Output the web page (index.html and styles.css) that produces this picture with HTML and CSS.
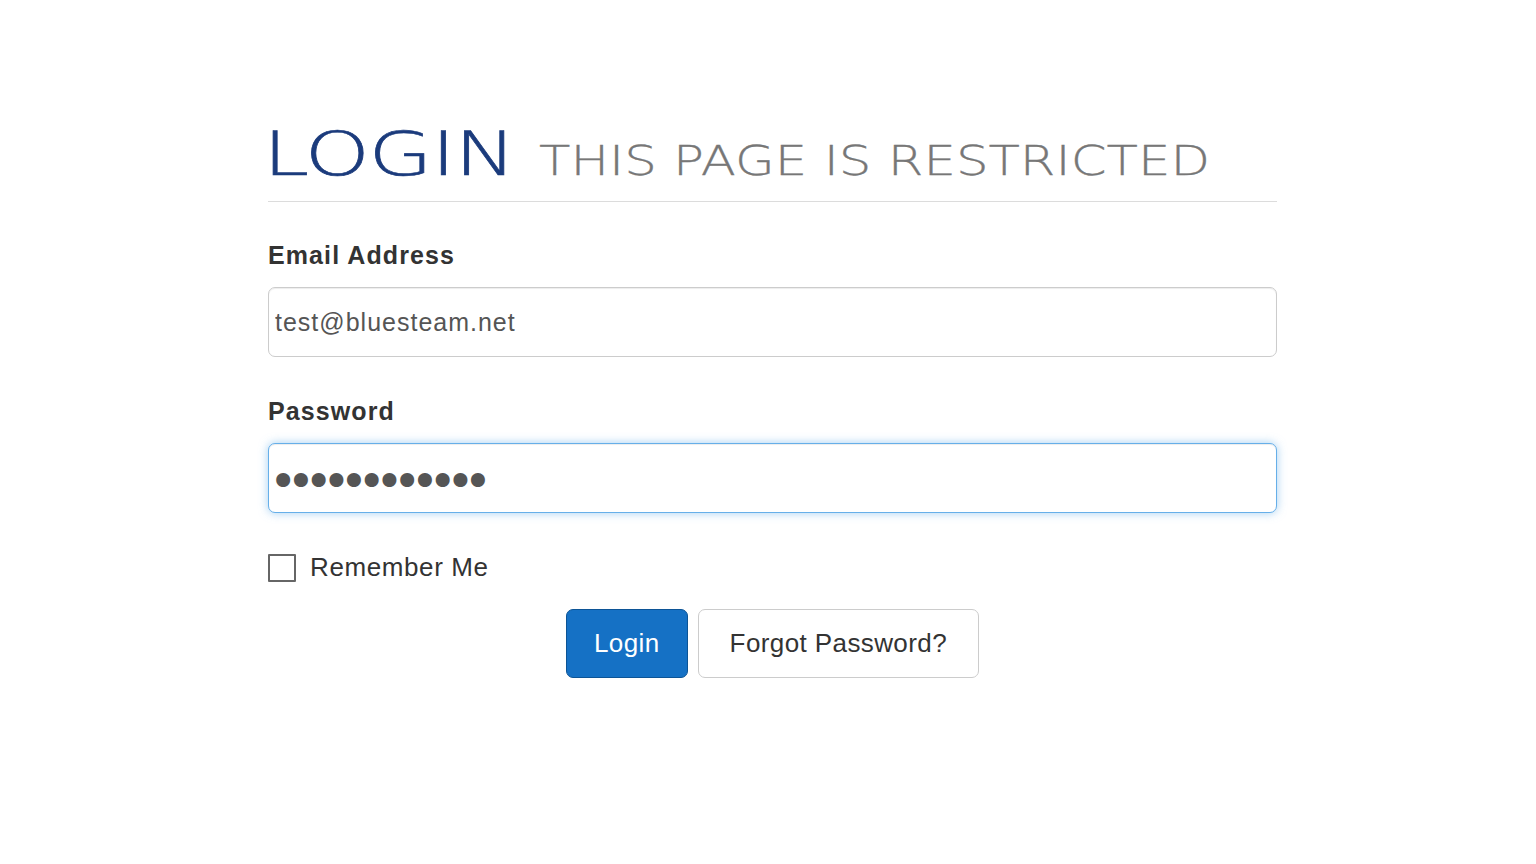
FILE: index.html
```html
<!DOCTYPE html>
<html lang="en">
<head>
<meta charset="utf-8">
<title>Login</title>
<link rel="stylesheet" href="styles.css">
</head>
<body>
<main class="page">
  <h1 class="title">
    <span class="title-main">LOGIN</span>
    <span class="title-sub">THIS PAGE IS RESTRICTED</span>
  </h1>
  <form class="form">
    <div class="group">
      <label class="label" for="email">Email Address</label>
      <input class="field" id="email" type="text" value="test@bluesteam.net">
    </div>
    <div class="group">
      <label class="label" for="pw">Password</label>
      <input class="field field-focus" id="pw" type="password" value="abcdefghijkl">
    </div>
    <label class="check">
      <input class="check-box" type="checkbox">
      <span class="check-text">Remember Me</span>
    </label>
    <div class="actions">
      <button type="button" class="btn btn-primary">Login</button>
      <button type="button" class="btn btn-default">Forgot Password?</button>
    </div>
  </form>
</main>
</body>
</html>
```
FILE: styles.css
```css
html, body {
  margin: 0;
  padding: 0;
  background: #ffffff;
}
body {
  font-family: "Liberation Sans", Arial, sans-serif;
  color: #333333;
}
.page {
  width: 1009px;
  margin: 0 0 0 268px;
}
.title {
  margin: 0;
  padding: 124px 0 17px 0;
  border-bottom: 1px solid #dcdcdc;
  font-family: "DejaVu Sans", sans-serif;
  font-weight: 200;
  line-height: 60px;
  height: 60px;
  white-space: nowrap;
}
.title-main {
  display: inline-block;
  margin-left: -5px;
  font-size: 60px;
  color: #1b3b7c;
  letter-spacing: -1px;
  transform: scaleX(1.38);
  transform-origin: left bottom;
  -webkit-text-stroke: 0.6px #1b3b7c;
}
.title-sub {
  display: inline-block;
  font-size: 41px;
  color: #777777;
  margin-left: 83px;
  transform: scaleX(1.253);
  transform-origin: left bottom;
  -webkit-text-stroke: 0.3px #777777;
}
.form {
  display: flex;
  flex-direction: column;
}
.group {
  display: flex;
  flex-direction: column;
}
.group + .group {
  margin-top: 39px;
}
.group:first-child {
  margin-top: 38px;
}
.label {
  font-size: 25px;
  font-weight: bold;
  line-height: 30px;
  color: #333333;
  margin-bottom: 17px;
  letter-spacing: 1.1px;
}
.field {
  box-sizing: border-box;
  height: 70px;
  width: 100%;
  margin: 0;
  padding: 0 6px;
  border: 1px solid #cccccc;
  border-radius: 7px;
  background: #ffffff;
  font-family: "Liberation Sans", Arial, sans-serif;
  font-size: 25px;
  letter-spacing: 1px;
  color: #555555;
  box-shadow: inset 0 1px 1px rgba(0, 0, 0, 0.075);
  outline: none;
}
.field-focus {
  border-color: #66afe9;
  box-shadow: inset 0 1px 1px rgba(0, 0, 0, 0.075), 0 0 10px rgba(102, 175, 233, 0.6);
  font-family: "DejaVu Sans", sans-serif;
  font-size: 48px;
  letter-spacing: -10.6px;
  padding: 6px 0 0 0;
}
.check {
  display: flex;
  align-items: center;
  gap: 14px;
  margin-top: 39px;
}
.check-box {
  appearance: none;
  -webkit-appearance: none;
  box-sizing: border-box;
  width: 28px;
  height: 28px;
  margin: 0;
  border: 2px solid #666666;
  border-radius: 1px;
  background: #ffffff;
}
.check-text {
  font-size: 26px;
  color: #333333;
  letter-spacing: 0.6px;
}
.actions {
  display: flex;
  justify-content: center;
  gap: 10px;
  margin-top: 26px;
}
.btn {
  box-sizing: border-box;
  height: 69px;
  border-radius: 7px;
  font-family: "Liberation Sans", Arial, sans-serif;
  font-size: 26px;
  letter-spacing: 0.4px;
  cursor: pointer;
}
.btn-primary {
  padding: 0 27px;
  background: #1571c5;
  border: 1px solid #0c5496;
  color: #ffffff;
}
.btn-default {
  padding: 0 31px;
  background: #ffffff;
  border: 1px solid #cccccc;
  color: #333333;
}
```
